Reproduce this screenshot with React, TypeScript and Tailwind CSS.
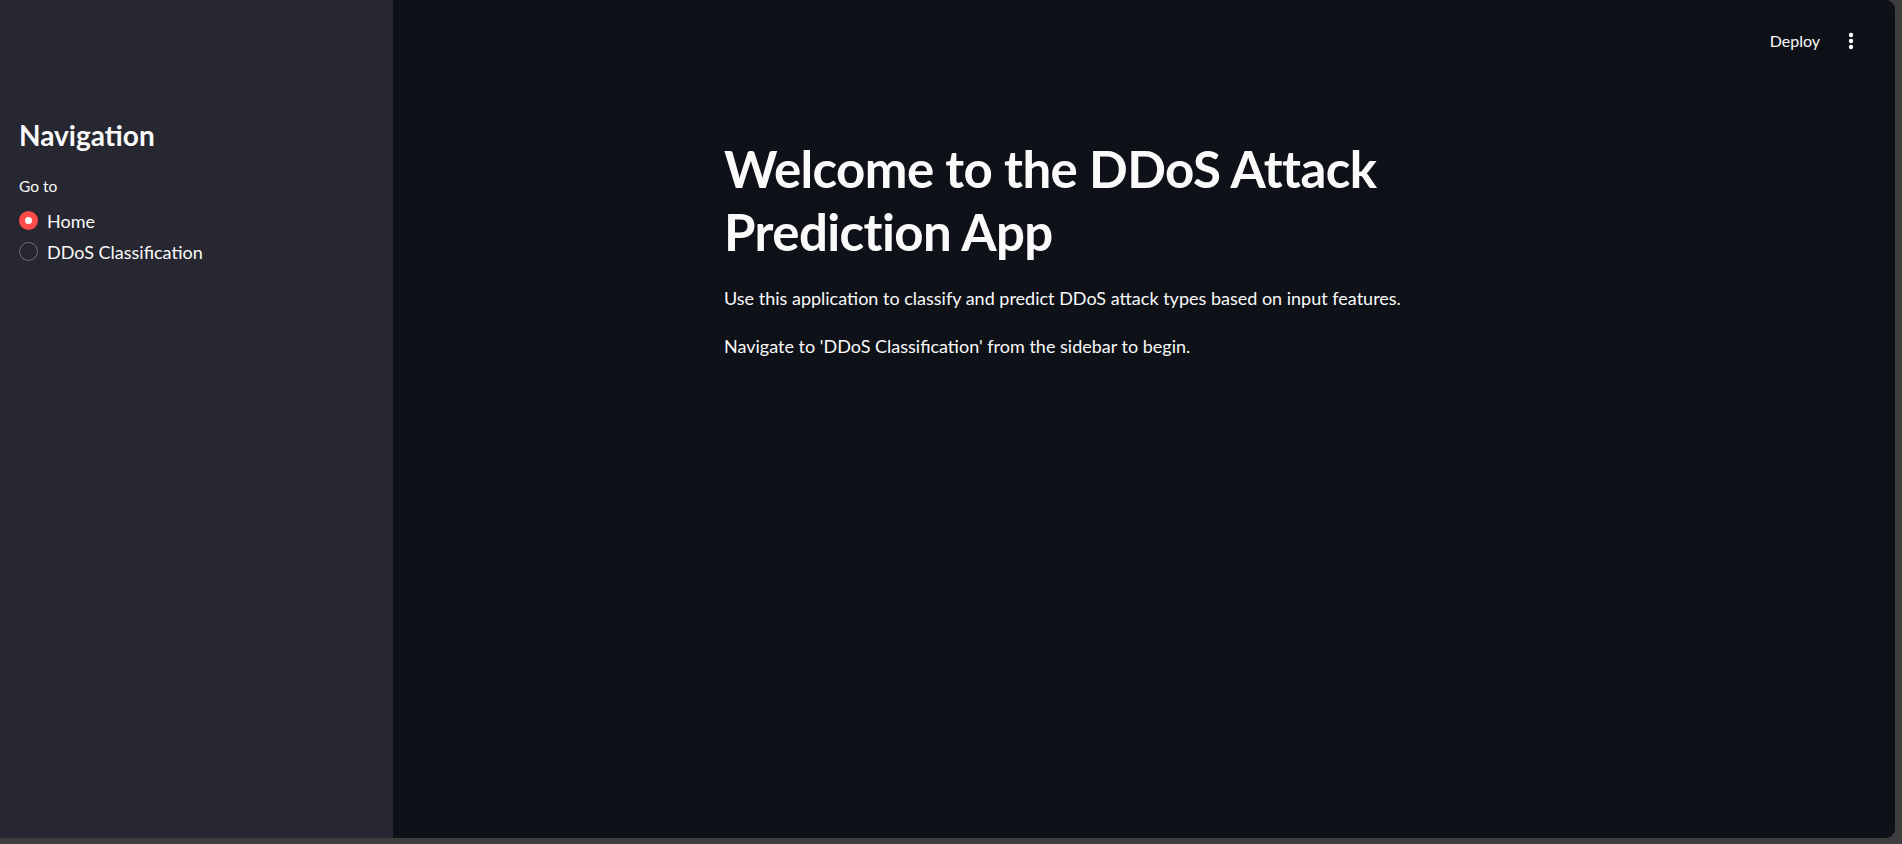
import React from "react";

function Radio({ checked, label }: { checked: boolean; label: string }) {
  return (
    <div className="flex items-center h-[31px]">
      {checked ? (
        <span className="w-[19px] h-[19px] rounded-full bg-[#ff4b4b] flex items-center justify-center">
          <span className="w-[7px] h-[7px] rounded-full bg-white" />
        </span>
      ) : (
        <span className="w-[19px] h-[19px] rounded-full border border-[#6e7078]" />
      )}
      <span className="ml-[9px] text-[18px] text-[#fafafa] leading-none">{label}</span>
    </div>
  );
}

export default function App() {
  return (
    <div className="w-[1902px] h-[844px] bg-[#3d3d3d] overflow-hidden font-[Lato,sans-serif]">
      <div className="flex w-[1895px] h-[838px] rounded-r-[9px] overflow-hidden">
        <aside className="w-[393px] shrink-0 bg-[#262730] pl-[19px] pt-[118px]">
          <h2 className="text-[28px] leading-[34px] font-bold text-[#fafafa]">Navigation</h2>
          <div className="mt-[24px] text-[15.5px] leading-[20px] text-[#fafafa]">Go to</div>
          <div className="mt-[9px] flex flex-col">
            <Radio checked label="Home" />
            <Radio checked={false} label="DDoS Classification" />
          </div>
        </aside>
        <main className="flex-1 bg-[#0e1117] flex flex-col">
          <header className="h-[82px] flex items-center justify-end pr-[41px]">
            <span className="text-[16px] text-[#fafafa]">Deploy</span>
            <svg className="ml-[28px]" width="6" height="18" viewBox="0 0 6 18">
              <circle cx="3" cy="3" r="2.2" fill="#fafafa" />
              <circle cx="3" cy="9" r="2.2" fill="#fafafa" />
              <circle cx="3" cy="15" r="2.2" fill="#fafafa" />
            </svg>
          </header>
          <div className="pl-[331px] pt-[55px] w-[1154px]">
            <h1 className="text-[51px] leading-[63px] font-bold text-[#fafafa] tracking-[-0.6px]">
              Welcome to the DDoS Attack Prediction App
            </h1>
            <p className="mt-[20px] text-[18px] leading-[30px] text-[#fafafa]">
              Use this application to classify and predict DDoS attack types based on input features.
            </p>
            <p className="mt-[18px] text-[18px] leading-[30px] text-[#fafafa]">
              Navigate to 'DDoS Classification' from the sidebar to begin.
            </p>
          </div>
        </main>
      </div>
    </div>
  );
}
